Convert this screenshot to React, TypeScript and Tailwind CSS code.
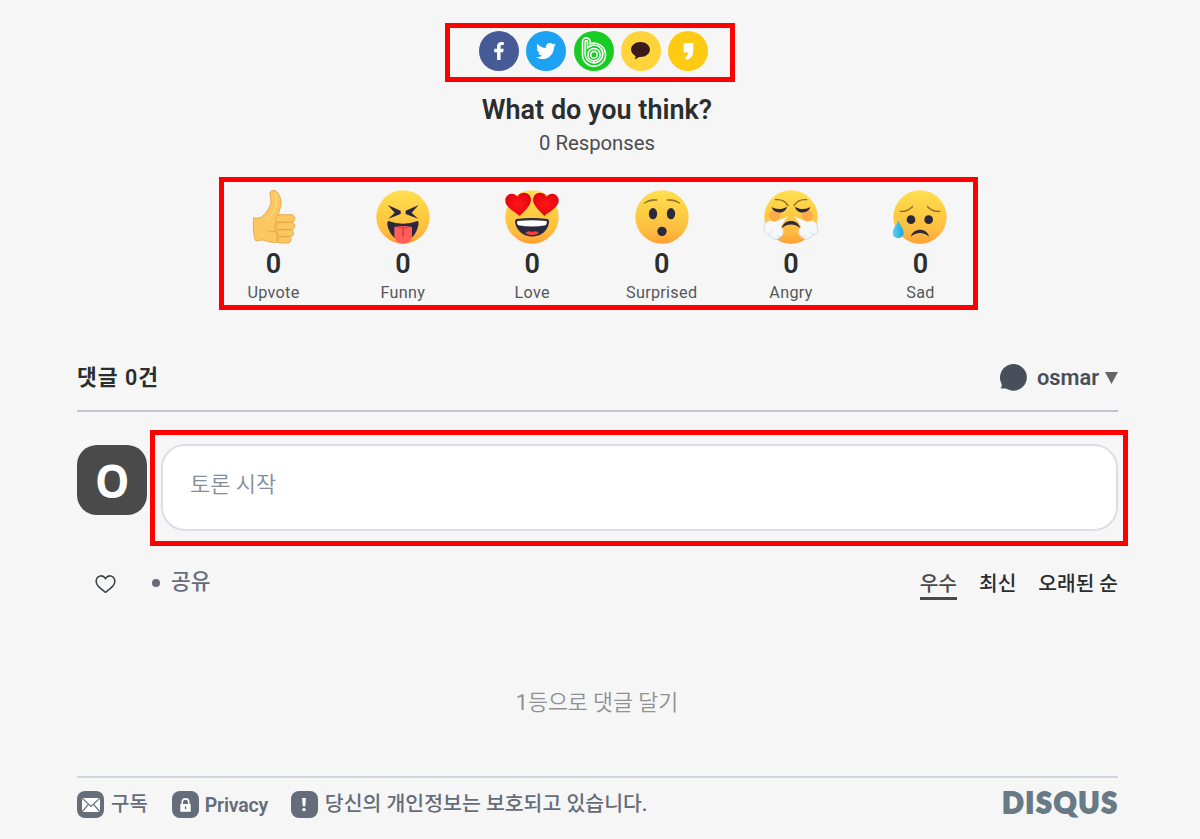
import type { ReactNode } from "react";
import { FaFacebookF, FaTwitter } from "react-icons/fa";

function Disc({ color, children }: { color: string; children: ReactNode }) {
  return (
    <a className={`flex size-[40px] items-center justify-center rounded-full text-white ${color}`}>{children}</a>
  );
}

function BandLogo() {
  return (
    <svg viewBox="0 0 123 123" className="mr-[1px] size-[41px] shrink-0" fill="none" stroke="#fff" strokeWidth="4.800">
      <path d="M28.500 70V32a11.500 11.500 0 0 1 23 0v6.500a34.500 34.500 0 1 1-23 32z" />
      <path d="M36.500 70V32a3.500 3.500 0 0 1 7 0v19a26.500 26.500 0 1 1-7 19z" />
      <circle cx="63" cy="71" r="18.500" />
      <circle cx="63" cy="71" r="10" />
    </svg>
  );
}

function KakaoTalkLogo() {
  return (
    <svg viewBox="0 0 56 52" className="h-[17.500px] w-[19px]" fill="#3b1a1b">
      <path d="M28 0C12.500 0 0 10 0 22.500 0 31 5.500 38 13.500 42L11 52l13-7.500 4 .2c15.500 0 28-9.800 28-22.200S43.500 0 28 0Z" />
    </svg>
  );
}

function KakaoStoryLogo() {
  return (
    <svg viewBox="0 0 32 50" className="h-[17px] w-[11px]" fill="#fff">
      <path d="M2 0h28v24c0 13-7 22-19 26L5 43c6-3 10-8 11-15H2Z" />
    </svg>
  );
}

function Face({ id, children }: { id: string; children: ReactNode }) {
  return (
    <svg viewBox="0 0 162 162" className="size-[54px] overflow-visible" strokeLinecap="round" strokeLinejoin="round">
      <defs>
        <linearGradient id={id} x1="0" y1="0" x2="0" y2="1">
          <stop offset="0" stopColor="#ffdf50" />
          <stop offset="0.5" stopColor="#fdc940" />
          <stop offset="0.78" stopColor="#ffbb40" />
          <stop offset="1" stopColor="#ff9f32" />
        </linearGradient>
      </defs>
      <circle cx="81" cy="81" r="80" fill={`url(#${id})`} />
      {children}
    </svg>
  );
}

function Thumb() {
  return (
    <svg viewBox="0 0 162 162" className="size-[54px]" strokeLinecap="round" strokeLinejoin="round">
      <g fill="#fbc760" stroke="#dda23d" strokeWidth="2.500">
        <path d="M20 84c12 2 22 0 28-6 14-15 24-31 24-45 0-9-6-20-2-27 5-7 17-6 22 2 9 13 13 27 9 42-3 10-7 18-7 27h16v80H78c-17 0-24-8-35-7l-16 3c-8-10-10-50-7-69Z" />
        <path d="M96 74h36c15 0 15 23 0 23H96c-14 0-14-23 0-23Z" />
        <path d="M98 97h34c15 0 15 22 0 22H98c-14 0-14-22 0-22Z" />
        <path d="M100 119h29c14 0 14 21 0 21h-29c-13 0-13-21 0-21Z" />
        <path d="M101 140h22c12 0 12 19 0 19h-22c-12 0-12-19 0-19Z" />
      </g>
      <path d="M64 123c10 4 18 2 25-3M87 96c-5 10-5 22 0 30s5 17 2 26" fill="none" stroke="#dda23d" strokeWidth="2.500" />
      <path d="M82 10c8 12 8 31 3 44-4 11-13 23-23 33" fill="none" stroke="#fdd27a" strokeWidth="5" />
    </svg>
  );
}

function Funny() {
  return (
    <Face id="funny">
      <path d="M35 45 74 62v10L37 86l19-18Zm93 0L89 62v10l37 14-19-18Z" fill="#2b2a3d" />
      <path d="M37 93q44 16 88 0c7 1 0 31-13 45-17 20-45 20-62 0C37 124 29 95 37 93Z" fill="#2b2a3d" />
      <path d="M55 111q26-6 53 0v25c0 34-53 34-53 0Z" fill="#ff5e5b" />
      <path d="M81 111v27" stroke="#d52d35" strokeWidth="4" />
      <path d="M62 111c5 6 12 5 18 3 7 3 14 2 19-3" fill="#ed4248" />
    </Face>
  );
}

const HEART = "M44 78C22 61-2 49 1 28 5 10 26 6 37 20 44 6 66 4 75 18c11 21-12 40-31 60Z";

function Love() {
  return (
    <Face id="love">
      <defs>
        <radialGradient id="heart">
          <stop offset="0" stopColor="#ff1616" />
          <stop offset="1" stopColor="#e60512" />
        </radialGradient>
      </defs>
      <path d={HEART} fill="url(#heart)" />
      <path d={HEART} transform="translate(162 0) scale(-1 1)" fill="url(#heart)" />
      <path d="M35 87q46-6 92 0c9 1 5 22-5 34-18 25-63 25-81 0-10-12-15-33-6-34Z" fill="#2b2a3d" />
      <path d="M39 93q42-4 84 0c5 1 2 10-1 13q-41 7-82 0c-4-3-6-12-1-13Z" fill="#fff" />
      <path d="M61 130c5-7 13-8 20-4 7-4 17-3 21 4-11 7-30 7-41 0Z" fill="#f34240" />
    </Face>
  );
}

function Surprised() {
  return (
    <Face id="surprised">
      <g fill="#2b2a3d">
        <ellipse cx="54" cy="71" rx="12.500" ry="17" />
        <ellipse cx="108" cy="71" rx="12.500" ry="17" />
        <circle cx="81" cy="124" r="14" />
      </g>
      <path d="M28 39q18-14 39-9-22 1-39 9Zm106 0q-18-14-39-9 22 1 39 9Z" fill="#96702a" stroke="#96702a" strokeWidth="2.500" />
    </Face>
  );
}

function Angry() {
  return (
    <Face id="angry">
      <circle cx="32" cy="76" r="17" fill="#ff7054" opacity=".35" />
      <circle cx="130" cy="76" r="17" fill="#ff7054" opacity=".35" />
      <path d="M23 51c12 8 32 8 46-1-4 23-40 23-46 1Zm116 0c-12 8-32 8-46-1 4 23 40 23 46 1Z" fill="#2b2a3d" />
      <path d="M34 29c18-2 30 4 38 18M128 29c-18-2-30 4-38 18" fill="none" stroke="#8f6a25" strokeWidth="4" />
      <path d="M54 114c5-28 49-28 54 0-16-14-38-14-54 0Z" fill="#2b2a3d" />
      <g id="steam">
        <path d="M74 77C60 85 41 91 30 96c-13-9-28-1-27 14-7 10 1 24 13 24 5 14 24 18 32 7 14-4 13-25 2-29 7-14 15-25 24-35Z" fill="#f6f7fb" />
        <path d="M14 93c-8 2-13 9-11 17-7 10 1 24 13 24 5 14 24 18 32 7 8-3 10-10 9-17" fill="none" stroke="#d3d9e6" strokeWidth="3" />
        <path d="M13 133c5-1 8-4 10-8m25 16c-4 0-8-2-10-5" fill="none" stroke="#d6deed" strokeWidth="3" />
      </g>
      <use href="#steam" transform="translate(162 0) scale(-1 1)" />
    </Face>
  );
}

function Sad() {
  return (
    <Face id="sad">
      <defs>
        <linearGradient id="tear" x1="0" x2="1">
          <stop offset="0" stopColor="#64cff5" />
          <stop offset="1" stopColor="#12a9df" />
        </linearGradient>
      </defs>
      <circle cx="54" cy="89" r="13" fill="#2b2a3d" />
      <circle cx="107" cy="89" r="13" fill="#2b2a3d" />
      <path d="M22 64c15 1 27-4 36-14M140 64c-15 1-27-4-36-14" fill="none" stroke="#96702a" strokeWidth="4.500" />
      <path d="M54 140c5-28 49-28 54 0-16-15-38-15-54 0Z" fill="#2b2a3d" />
      <path d="M17 91C11 106-1 115-1 129c0 20 33 20 33 0 0-14-12-23-15-38Z" fill="url(#tear)" />
    </Face>
  );
}

const reactions = [
  { label: "Upvote", icon: <Thumb /> },
  { label: "Funny", icon: <Funny /> },
  { label: "Love", icon: <Love /> },
  { label: "Surprised", icon: <Surprised /> },
  { label: "Angry", icon: <Angry /> },
  { label: "Sad", icon: <Sad /> },
];

function Badge({ children }: { children: ReactNode }) {
  return (
    <span className="flex size-[27px] shrink-0 items-center justify-center rounded-[8px] bg-[#656c7a] text-white">
      {children}
    </span>
  );
}

export default function App() {
  return (
    <div className="flex h-[839px] w-[1200px] flex-col overflow-hidden bg-[#f6f6f6] pt-[23px] font-['Roboto','Noto_Sans_CJK_KR',sans-serif] text-[#2a2e2e]">
      <div className="ml-[445px] flex h-[59px] w-[290px] justify-between border-5 border-[#ff0000] pt-[3px] pr-[22px] pl-[29px]">
        <Disc color="bg-[#465a98]"><FaFacebookF className="h-[18px] w-[12px]" /></Disc>
        <Disc color="bg-[#1da1f2]"><FaTwitter className="size-[20px]" /></Disc>
        <Disc color="bg-[#19cc24]"><BandLogo /></Disc>
        <Disc color="bg-[#ffd43b]"><KakaoTalkLogo /></Disc>
        <Disc color="bg-[#ffcb12]"><KakaoStoryLogo /></Disc>
      </div>

      <div className="mt-[12px] w-[1194px] text-center">
        <h2 className="h-[32px] text-[27px] leading-[32px] font-semibold">What do you think?</h2>
        <p className="mt-[5px] h-[24px] text-[20.300px] leading-[24px] text-[#4a4c4f]">0 Responses</p>
      </div>

      <div className="mt-[22px] ml-[219px] flex h-[133px] w-[759px] justify-between border-5 border-[#ff0000] pt-[8px] pr-[12px] pl-[9px]">
        {reactions.map(({ label, icon }) => (
          <div key={label} className="flex w-[81px] flex-col items-center">
            {icon}
            <b className="mt-[4px] h-[32px] text-[27px] leading-[32px] font-semibold">0</b>
            <span className="h-[24px] text-[16.200px] leading-[25px] tracking-[0.3px] text-[#55585b]">{label}</span>
          </div>
        ))}
      </div>

      <header className="mt-[40px] ml-[77px] flex h-[62px] w-[1041px] justify-between border-b-2 border-[#c2c6cc] pt-[12px]">
        <h3 className="text-[21.500px] leading-[31px] font-semibold tracking-[1px]">댓글 0건</h3>
        <div className="flex h-[31px] items-center text-[#494e5a]">
          <svg viewBox="0 0 81 82" className="h-[27px] w-[27px]" fill="currentColor">
            <path d="M41 0a40.500 40.500 0 1 1-20 76c-6-3-13-1-21-2 5-5 6-8 4-14A41 41 0 0 1 41 0Z" />
          </svg>
          <span className="mt-[2px] ml-[10px] text-[21.800px] font-semibold">osmar</span>
          <svg viewBox="0 0 13 12" className="ml-[6px] h-[12px] w-[13px]" fill="#656565"><path d="M0 0h13L6.500 12Z" /></svg>
        </div>
      </header>

      <div className="mt-[18px] ml-[77px] flex h-[116px]">
        <div className="mt-[14.500px] flex size-[70px] items-center justify-center rounded-[20px] bg-[#4a4a4a] font-['Open_Sans',sans-serif] text-[46px] leading-none font-bold text-white">
          <span className="scale-x-[0.94]">O</span>
        </div>
        <div className="ml-[3px] w-[978px] border-5 border-[#ff0000] pt-[9px] pl-[6px]">
          <div className="h-[87px] w-[957px] rounded-[24px] border-2 border-[#dbdfe4] bg-white px-[27px] pt-[23px] text-[22px] leading-[32px] font-[350] text-[#868d9a]">
            토론 시작
          </div>
        </div>
      </div>

      <nav className="mt-[18px] ml-[77px] flex h-[36px] w-[1041px] justify-between">
        <div className="flex h-[36px] items-center text-[#656c7a]">
          <svg viewBox="0 0 60 52" className="mt-[3px] ml-[18px] h-[18px] w-[21px]" fill="none" stroke="#3c3f42" strokeWidth="4.500">
            <path d="M30 10C21-3 3 2 3 19c0 13 17 24 27 31 10-7 27-18 27-31C57 2 39-3 30 10Z" />
          </svg>
          <span className="mt-[2px] ml-[36px] size-[8px] rounded-full bg-[#656c7a]" />
          <span className="ml-[11px] text-[21.500px] leading-[36px] font-medium">공유</span>
        </div>
        <div className="flex text-[20.300px] leading-[40px] font-medium">
          <span className="h-[36px] border-b-3 border-[#4a4a4a] text-[#4a4a4a]">우수</span>
          <span className="ml-[22px]">최신</span>
          <span className="ml-[22px]">오래된 순</span>
        </div>
      </nav>

      <p className="mt-[85px] h-[36px] w-[1194px] text-center text-[21.700px] leading-[36px] font-[350] text-[#8f9092]">
        <span className="font-normal">1</span>등으로 댓글 달기
      </p>

      <footer className="mt-[55px] ml-[77px] flex h-[56px] w-[1041px] border-t-2 border-[#d1d5e4] text-[20px] leading-[27px] text-[#656c7a]">
        <div className="flex pt-[13px] font-medium">
          <Badge>
            <svg viewBox="0 0 54 42" className="h-[14px] w-[18px]" fill="#fff">
              <path d="M0 0h54v42H0Z" />
              <path d="m0 0 27 25L54 0M0 42l19-23m35 23L35 19" fill="none" stroke="#656c7a" strokeWidth="3.500" />
            </svg>
          </Badge>
          <span className="ml-[7px]">구독</span>
        </div>
        <div className="ml-[24px] flex pt-[13px] font-semibold">
          <Badge>
            <svg viewBox="0 0 34 42" className="h-[14px] w-[11px]" fill="#fff">
              <path d="M7 19v-7a10 10 0 0 1 20 0v7" fill="none" stroke="#fff" strokeWidth="5" />
              <path d="M1 18h32v24H1Z" />
              <path d="M17 25v9" stroke="#656c7a" strokeWidth="4" />
            </svg>
          </Badge>
          <span className="mt-[1px] ml-[6px] w-[63px] text-[19.500px] tracking-[-0.2px]">Privacy</span>
        </div>
        <div className="ml-[23px] flex pt-[13px] font-medium">
          <Badge><svg viewBox="0 0 4 14" className="h-[13px] w-[4px]" fill="#fff"><path d="M0 0h4l-.6 9H.6ZM.4 11h3.200v3H.4Z" /></svg></Badge>
          <span className="ml-[7px] text-[20.500px]">당신의 개인정보는 보호되고 있습니다.</span>
        </div>
        <span className="mr-[-1px] ml-auto pt-[10px] font-['Lato',sans-serif] text-[28px] leading-[28px] font-black tracking-[2.100px] text-[#687a86] [-webkit-text-stroke:1.800px_#687a86]">DISQUS</span>
      </footer>
    </div>
  );
}
